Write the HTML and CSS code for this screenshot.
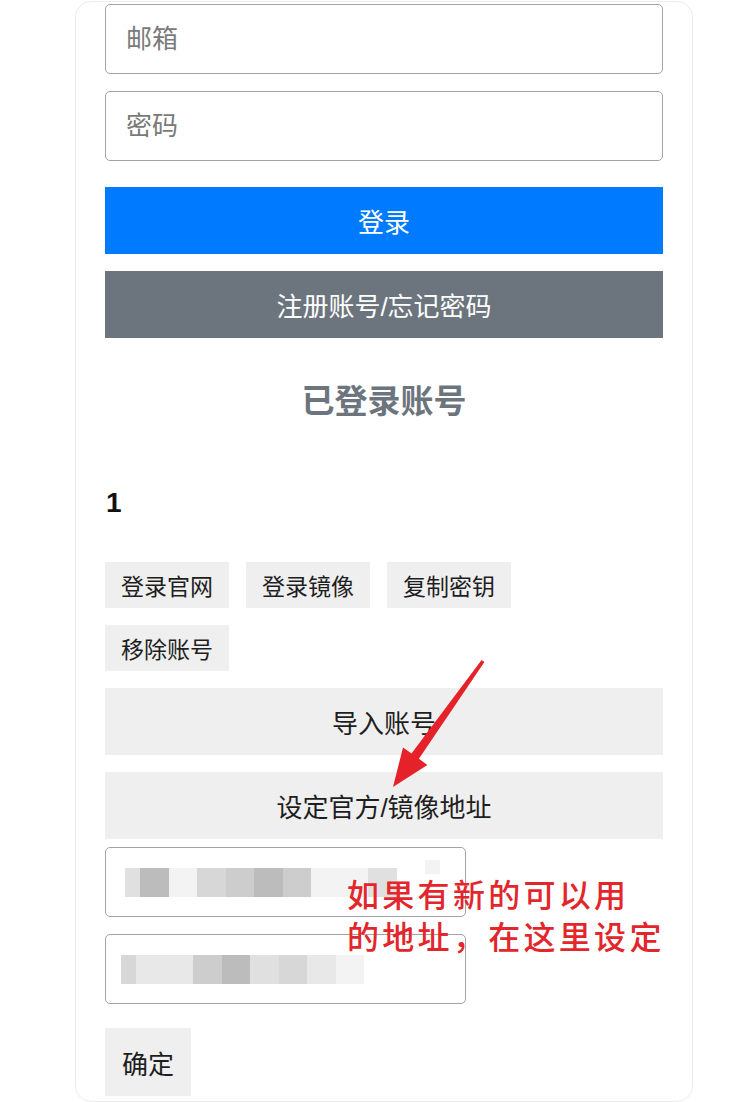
FILE: index.html
```html
<!DOCTYPE html>
<html lang="zh-CN">
<head>
  <meta charset="UTF-8" />
  <meta name="viewport" content="width=device-width, initial-scale=1.0"/>
  <title>账号登录</title>
  <link rel="stylesheet" href="styles.css">
</head>
<body>
  <div class="card">
    <input class="field" type="text" placeholder="邮箱" />
    <input class="field gap-sm" type="password" placeholder="密码" />

    <button class="btn btn-primary login">登录</button>
    <button class="btn btn-secondary gap-sm">注册账号/忘记密码</button>

    <h3 class="title">已登录账号</h3>

    <div class="account">
      <h4 class="account-name">1</h4>
      <div class="actions">
        <button class="small-btn">登录官网</button>
        <button class="small-btn">登录镜像</button>
        <button class="small-btn">复制密钥</button>
        <button class="small-btn">移除账号</button>
      </div>
    </div>

    <button class="btn btn-light gap-sm">导入账号</button>
    <button class="btn btn-light gap-sm">设定官方/镜像地址</button>

    <!-- address values are pixelated in the screenshot -->
    <div class="field short mosaic first-addr">
      <span class="c-s g3"></span><span class="c g6"></span><span class="c g1"></span><span class="c g4"></span><span class="c g5"></span><span class="c g6"></span><span class="c g5"></span><span class="c-w g1"></span><span class="c g3"></span><span class="c blank"></span><span class="c-s g1 top"></span>
    </div>
    <div class="field short mosaic gap-sm second-addr">
      <span class="c-s g4"></span><span class="c g2"></span><span class="c g2"></span><span class="c g5"></span><span class="c g6"></span><span class="c g3"></span><span class="c g4"></span><span class="c g2"></span><span class="c g1"></span>
    </div>

    <button class="ok-btn">确定</button>
  </div>

  <svg class="arrow" viewBox="380 650 110 145" width="110" height="145">
    <polygon points="484.4,662.1 418.9,758.8 427.4,765 393,787 403,747.4 411.5,753.6 481.6,659.9" fill="#e52229" />
  </svg>

  <div class="note">如果有新的可以用<br>的地址，在这里设定</div>
</body>
</html>
```

FILE: styles.css
```css
* {
  box-sizing: border-box;
}

body {
  margin: 0;
  background: #fff;
  font-family: "Liberation Sans", "Noto Sans CJK SC", sans-serif;
  color: #222;
}

.card {
  display: flex;
  flex-direction: column;
  align-items: flex-start;
  width: 618px;
  margin: 1px 0 0 75px;
  padding: 2px 29px 5px;
  border: 1px solid #ebebeb;
  border-radius: 16px;
}

.field {
  width: 100%;
  height: 70px;
  padding: 0 20px;
  border: 1px solid #a3a3a3;
  border-radius: 5px;
  background: #fff;
  font-family: inherit;
  font-size: 26px;
  color: #222;
  outline: none;
}

.field::placeholder {
  color: #7a7a7a;
}

.gap-sm {
  margin-top: 17px;
}

.btn {
  display: block;
  width: 100%;
  height: 67px;
  border: none;
  font-family: inherit;
  font-size: 26px;
  cursor: pointer;
}

.btn-primary {
  background: #007bff;
  color: #fff;
}

.login {
  margin-top: 26px;
}

.btn-secondary {
  background: #6c757d;
  color: #fff;
}

.btn-light {
  background: #efefef;
  color: #1e1e1e;
}

.title {
  align-self: stretch;
  margin: 44px 0 0;
  height: 40px;
  line-height: 40px;
  text-align: center;
  font-size: 33px;
  font-weight: bold;
  color: #6c757d;
}

.account {
  align-self: stretch;
}

.account-name {
  margin: 64px 0 0 1px;
  height: 34px;
  line-height: 34px;
  font-size: 28px;
  font-weight: bold;
  color: #111;
}

.actions {
  display: flex;
  flex-wrap: wrap;
  gap: 17px;
  margin-top: 42px;
  width: 430px;
}

.small-btn {
  height: 46px;
  padding: 0 16px;
  border: none;
  background: #efefef;
  font-family: inherit;
  font-size: 23px;
  color: #1e1e1e;
  cursor: pointer;
}

.short {
  width: 361px;
}

.first-addr {
  margin-top: 8px;
}

.mosaic {
  display: flex;
  align-items: center;
  padding: 0 0 0 19px;
}

.second-addr {
  padding-left: 15px;
}

.mosaic span {
  height: 29px;
}

.mosaic .top {
  height: 14px;
  align-self: flex-start;
  margin-top: 12px;
}

.c-s { width: 15px; }
.c { width: 28.5px; }
.c-w { width: 57px; }

.g1 { background: #f3f3f3; }
.g2 { background: #e8e8e8; }
.g3 { background: #e0e0e0; }
.g4 { background: #d7d7d7; }
.g5 { background: #cdcdcd; }
.g6 { background: #bcbcbc; }
.blank { background: transparent; }

.ok-btn {
  margin-top: 24px;
  height: 68px;
  padding: 0 17px;
  border: none;
  background: #efefef;
  font-family: inherit;
  font-size: 26px;
  color: #1e1e1e;
  cursor: pointer;
}

.arrow {
  position: absolute;
  left: 380px;
  top: 650px;
}

.note {
  position: absolute;
  left: 347px;
  top: 872px;
  font-family: "Noto Sans CJK SC", sans-serif;
  font-size: 32px;
  font-weight: 500;
  line-height: 42px;
  letter-spacing: 3.3px;
  color: #e3262c;
}
```
